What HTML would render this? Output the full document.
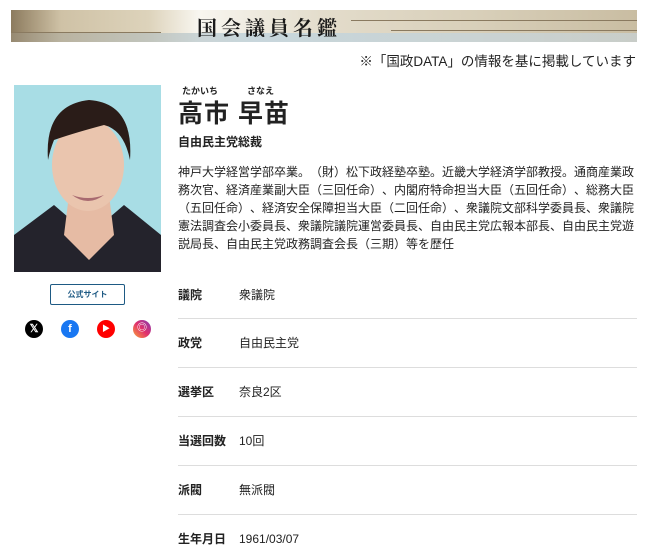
<!DOCTYPE html>
<html><head><meta charset="utf-8"><style>
*{margin:0;padding:0;box-sizing:border-box}
body{width:650px;height:554px;background:#fff;font-family:"Liberation Sans","Noto Sans CJK JP",sans-serif;color:#222;position:relative;overflow:hidden;text-spacing-trim:space-all}
.ban{position:absolute;left:11px;top:10px;width:626px;height:32px;background:linear-gradient(90deg,#8c7b5e 0%,#cfc2a6 8%,#ddd3bb 22%,#f8f6f0 30%,#e3dccb 50%,#d8cfb9 75%,#c9bda2 100%);overflow:hidden}
.ban:after{content:"";position:absolute;left:0;right:0;bottom:0;height:9px;background:linear-gradient(90deg,rgba(160,150,130,.5),rgba(190,210,220,.8) 40%,rgba(200,215,225,.6))}
.ban .t{position:absolute;left:186px;top:2px;font-family:"Noto Serif CJK SC",serif;font-weight:bold;font-size:20px;letter-spacing:4px;color:#1a1a1a;z-index:2}
.ban .l{position:absolute;height:1px;background:#8a7a60}
.note{position:absolute;right:14px;top:50px;font-size:13.5px;color:#222}
.photo{position:absolute;left:14px;top:85px;width:147px;height:187px;background:#a8dde5;overflow:hidden}
.btn{position:absolute;left:50px;top:284px;width:75px;height:21px;border:1px solid #1e5a84;border-radius:2px;font-size:8px;font-weight:bold;color:#1e5a84;text-align:center;line-height:19px}
.ic{position:absolute;top:320px;width:18px;height:18px;border-radius:50%;color:#fff;font-size:11px;font-weight:bold;text-align:center;line-height:18px}
.ruby{position:absolute;top:84px;font-size:9px;font-weight:bold}
.name{position:absolute;left:178px;top:94px;font-size:25px;font-weight:bold;letter-spacing:1px}
.title{position:absolute;left:178px;top:133px;font-size:12px;font-weight:bold}
.bio{position:absolute;left:178px;top:163px;width:460px;font-family:"Noto Sans CJK JP",sans-serif;font-size:12px;line-height:18px;text-spacing-trim:space-all;font-feature-settings:normal}
.lab{position:absolute;left:178px;font-size:12px;font-weight:bold;line-height:20px}
.val{position:absolute;left:239px;font-size:12px;line-height:20px}
.hr{position:absolute;left:178px;width:459px;height:1px;background:#ddd}
</style></head><body>
<div class="ban"><div class="l" style="left:0;width:150px;top:22px"></div><div class="l" style="left:340px;right:0;top:10px"></div><div class="l" style="left:380px;right:0;top:20px"></div><div class="t">国会議員名鑑</div></div>
<div class="note">※「国政DATA」の情報を基に掲載しています</div>
<div class="photo"><svg width="147" height="187" viewBox="0 0 147 187">
<path d="M0 150 L40 120 L75 150 L110 120 L147 150 L147 187 L0 187Z" fill="#24232c"/>
<path d="M55 110 L95 110 L100 150 L75 175 L50 150Z" fill="#e6bba4"/>
<ellipse cx="74" cy="80" rx="36" ry="46" fill="#eac5ae"/>
<path d="M34 75 Q30 20 75 15 Q120 18 116 75 Q110 45 90 40 Q60 48 40 55 Q36 65 34 75Z" fill="#2a1c18"/>
<path d="M58 110 Q74 122 90 110 Q74 116 58 110Z" fill="#a86a70"/>
</svg></div>
<div class="btn">公式サイト</div>
<div class="ic" style="left:25px;background:#000">𝕏</div>
<div class="ic" style="left:61px;background:#1877f2">f</div>
<div class="ic" style="left:97px;background:#f00;font-size:8px">▶</div>
<div class="ic" style="left:133px;background:linear-gradient(45deg,#f9a23a,#e1306c,#833ab4);font-size:10px">◎</div>
<div class="ruby" style="left:182px">たかいち</div>
<div class="ruby" style="left:247px">さなえ</div>
<div class="name">高市 早苗</div>
<div class="title">自由民主党総裁</div>
<div class="bio">神戸大学経営学部卒業。（財）松下政経塾卒塾。近畿大学経済学部教授。通商産業政<br>務次官、経済産業副大臣（三回任命）、内閣府特命担当大臣（五回任命）、総務大臣<br>（五回任命）、経済安全保障担当大臣（二回任命）、衆議院文部科学委員長、衆議院<br>憲法調査会小委員長、衆議院議院運営委員長、自由民主党広報本部長、自由民主党遊<br>説局長、自由民主党政務調査会長（三期）等を歴任</div>
<div class="lab" style="top:285px">議院</div><div class="val" style="top:285px">衆議院</div>
<div class="hr" style="top:318px"></div>
<div class="lab" style="top:333px">政党</div><div class="val" style="top:333px">自由民主党</div>
<div class="hr" style="top:367px"></div>
<div class="lab" style="top:382px">選挙区</div><div class="val" style="top:382px">奈良2区</div>
<div class="hr" style="top:416px"></div>
<div class="lab" style="top:431px">当選回数</div><div class="val" style="top:431px">10回</div>
<div class="hr" style="top:465px"></div>
<div class="lab" style="top:480px">派閥</div><div class="val" style="top:480px">無派閥</div>
<div class="hr" style="top:514px"></div>
<div class="lab" style="top:529px">生年月日</div><div class="val" style="top:529px">1961/03/07</div>
</body></html>
